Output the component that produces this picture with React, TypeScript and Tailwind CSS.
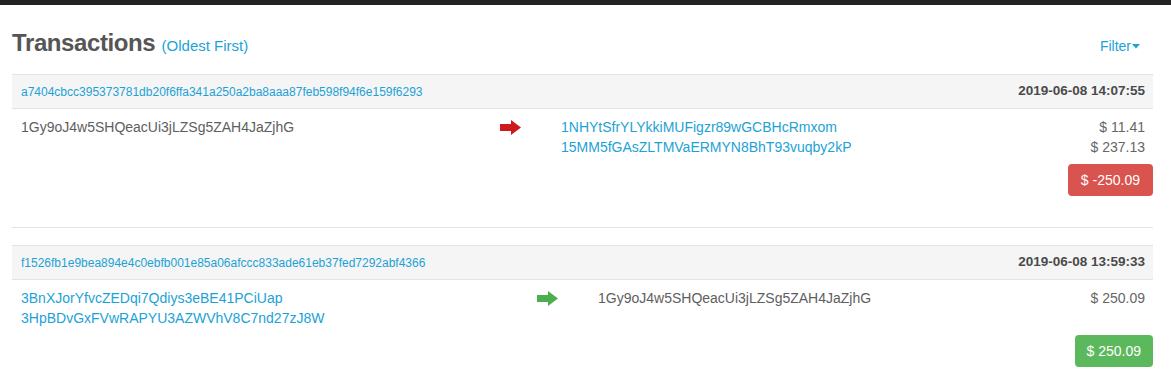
import React from 'react';

type Tx = {
  hash: string;
  time: string;
  inputs: string[];
  inputsAreLinks: boolean;
  outputs: string[];
  outputsAreLinks: boolean;
  amounts: string[];
  total: string;
  incoming: boolean;
  leftWidth: string;
};

const txs: Tx[] = [
  {
    hash: 'a7404cbcc395373781db20f6ffa341a250a2ba8aaa87feb598f94f6e159f6293',
    time: '2019-06-08 14:07:55',
    inputs: ['1Gy9oJ4w5SHQeacUi3jLZSg5ZAH4JaZjhG'],
    inputsAreLinks: false,
    outputs: ['1NHYtSfrYLYkkiMUFigzr89wGCBHcRmxom', '15MM5fGAsZLTMVaERMYN8BhT93vuqby2kP'],
    outputsAreLinks: true,
    amounts: ['$ 11.41', '$ 237.13'],
    total: '$ -250.09',
    incoming: false,
    leftWidth: 'w-[479px]',
  },
  {
    hash: 'f1526fb1e9bea894e4c0ebfb001e85a06afccc833ade61eb37fed7292abf4366',
    time: '2019-06-08 13:59:33',
    inputs: ['3BnXJorYfvcZEDqi7Qdiys3eBE41PCiUap', '3HpBDvGxFVwRAPYU3AZWVhV8C7nd27zJ8W'],
    inputsAreLinks: true,
    outputs: ['1Gy9oJ4w5SHQeacUi3jLZSg5ZAH4JaZjhG'],
    outputsAreLinks: false,
    amounts: ['$ 250.09'],
    total: '$ 250.09',
    incoming: true,
    leftWidth: 'w-[516px]',
  },
];

function Arrow({ incoming }: { incoming: boolean }) {
  const fill = incoming ? '#4cae4c' : '#cc1a1f';
  return (
    <svg width="21" height="15" viewBox="0 0 21 15" className="mt-[3px]">
      <rect x="0" y="4" width="12" height="7" fill={fill} />
      <polygon points="11,0 21,7.5 11,15" fill={fill} />
    </svg>
  );
}

function AddressList({ items, links }: { items: string[]; links: boolean }) {
  return (
    <div className="flex flex-col">
      {items.map((a) => (
        <a
          key={a}
          href="#"
          className={links ? 'text-[#1ca2d6] leading-[20px]' : 'text-[#5e5e5e] leading-[20px]'}
        >
          {a}
        </a>
      ))}
    </div>
  );
}

function Transaction({ tx }: { tx: Tx }) {
  return (
    <div className="border-t border-b border-[#e3e3e3]">
      <div className="flex items-center justify-between h-[34px] bg-[#f5f5f5] border-b border-[#e3e3e3] pl-[9px] pr-[8px]">
        <a href="#" className="text-[12px] text-[#1ca2d6]">
          {tx.hash}
        </a>
        <span className="text-[13.5px] font-bold text-[#4a4a4a]">{tx.time}</span>
      </div>
      <div className="pl-[9px] pt-[8px] pb-[31px] text-[14px]">
        <div className="flex pr-[8px]">
          <div className={tx.leftWidth}>
            <AddressList items={tx.inputs} links={tx.inputsAreLinks} />
          </div>
          <div className="w-[61px]">
            <Arrow incoming={tx.incoming} />
          </div>
          <div className="flex-1">
            <AddressList items={tx.outputs} links={tx.outputsAreLinks} />
          </div>
          <div className="flex flex-col items-end text-[#666]">
            {tx.amounts.map((m, i) => (
              <span key={i} className="leading-[20px]">
                {m}
              </span>
            ))}
          </div>
        </div>
        <div className="flex justify-end mt-[7px]">
          <span
            className={
              tx.incoming
                ? 'rounded-[4px] bg-[#5cb85c] text-white px-[12px] py-[6px] leading-[20px]'
                : 'rounded-[4px] bg-[#d9534f] text-white px-[13px] py-[6px] leading-[20px]'
            }
          >
            {tx.total}
          </span>
        </div>
      </div>
    </div>
  );
}

export default function App() {
  return (
    <div className="min-h-screen bg-white" style={{ fontFamily: '"Liberation Sans", Arial, sans-serif' }}>
      <div className="h-[5px] bg-[#222]" />
      <div className="pl-[12px] pr-[18px]">
        <div className="flex items-baseline justify-between mt-[24px] mb-[14px]">
          <h2 className="text-[24px] leading-[28px] font-bold text-[#555] tracking-[-0.4px]">
            Transactions{' '}
            <a href="#" className="text-[15px] font-normal tracking-normal text-[#1ca2d6]">
              (Oldest First)
            </a>
          </h2>
          <a href="#" className="flex items-center text-[14px] text-[#1ca2d6] mr-[13px]">
            Filter
            <svg width="8" height="5" viewBox="0 0 8 5" className="ml-[1px]">
              <polygon points="0,0 8,0 4,4.5" fill="#1ca2d6" />
            </svg>
          </a>
        </div>
        <div className="flex flex-col gap-[17px]">
          {txs.map((tx) => (
            <Transaction key={tx.hash} tx={tx} />
          ))}
        </div>
      </div>
    </div>
  );
}
